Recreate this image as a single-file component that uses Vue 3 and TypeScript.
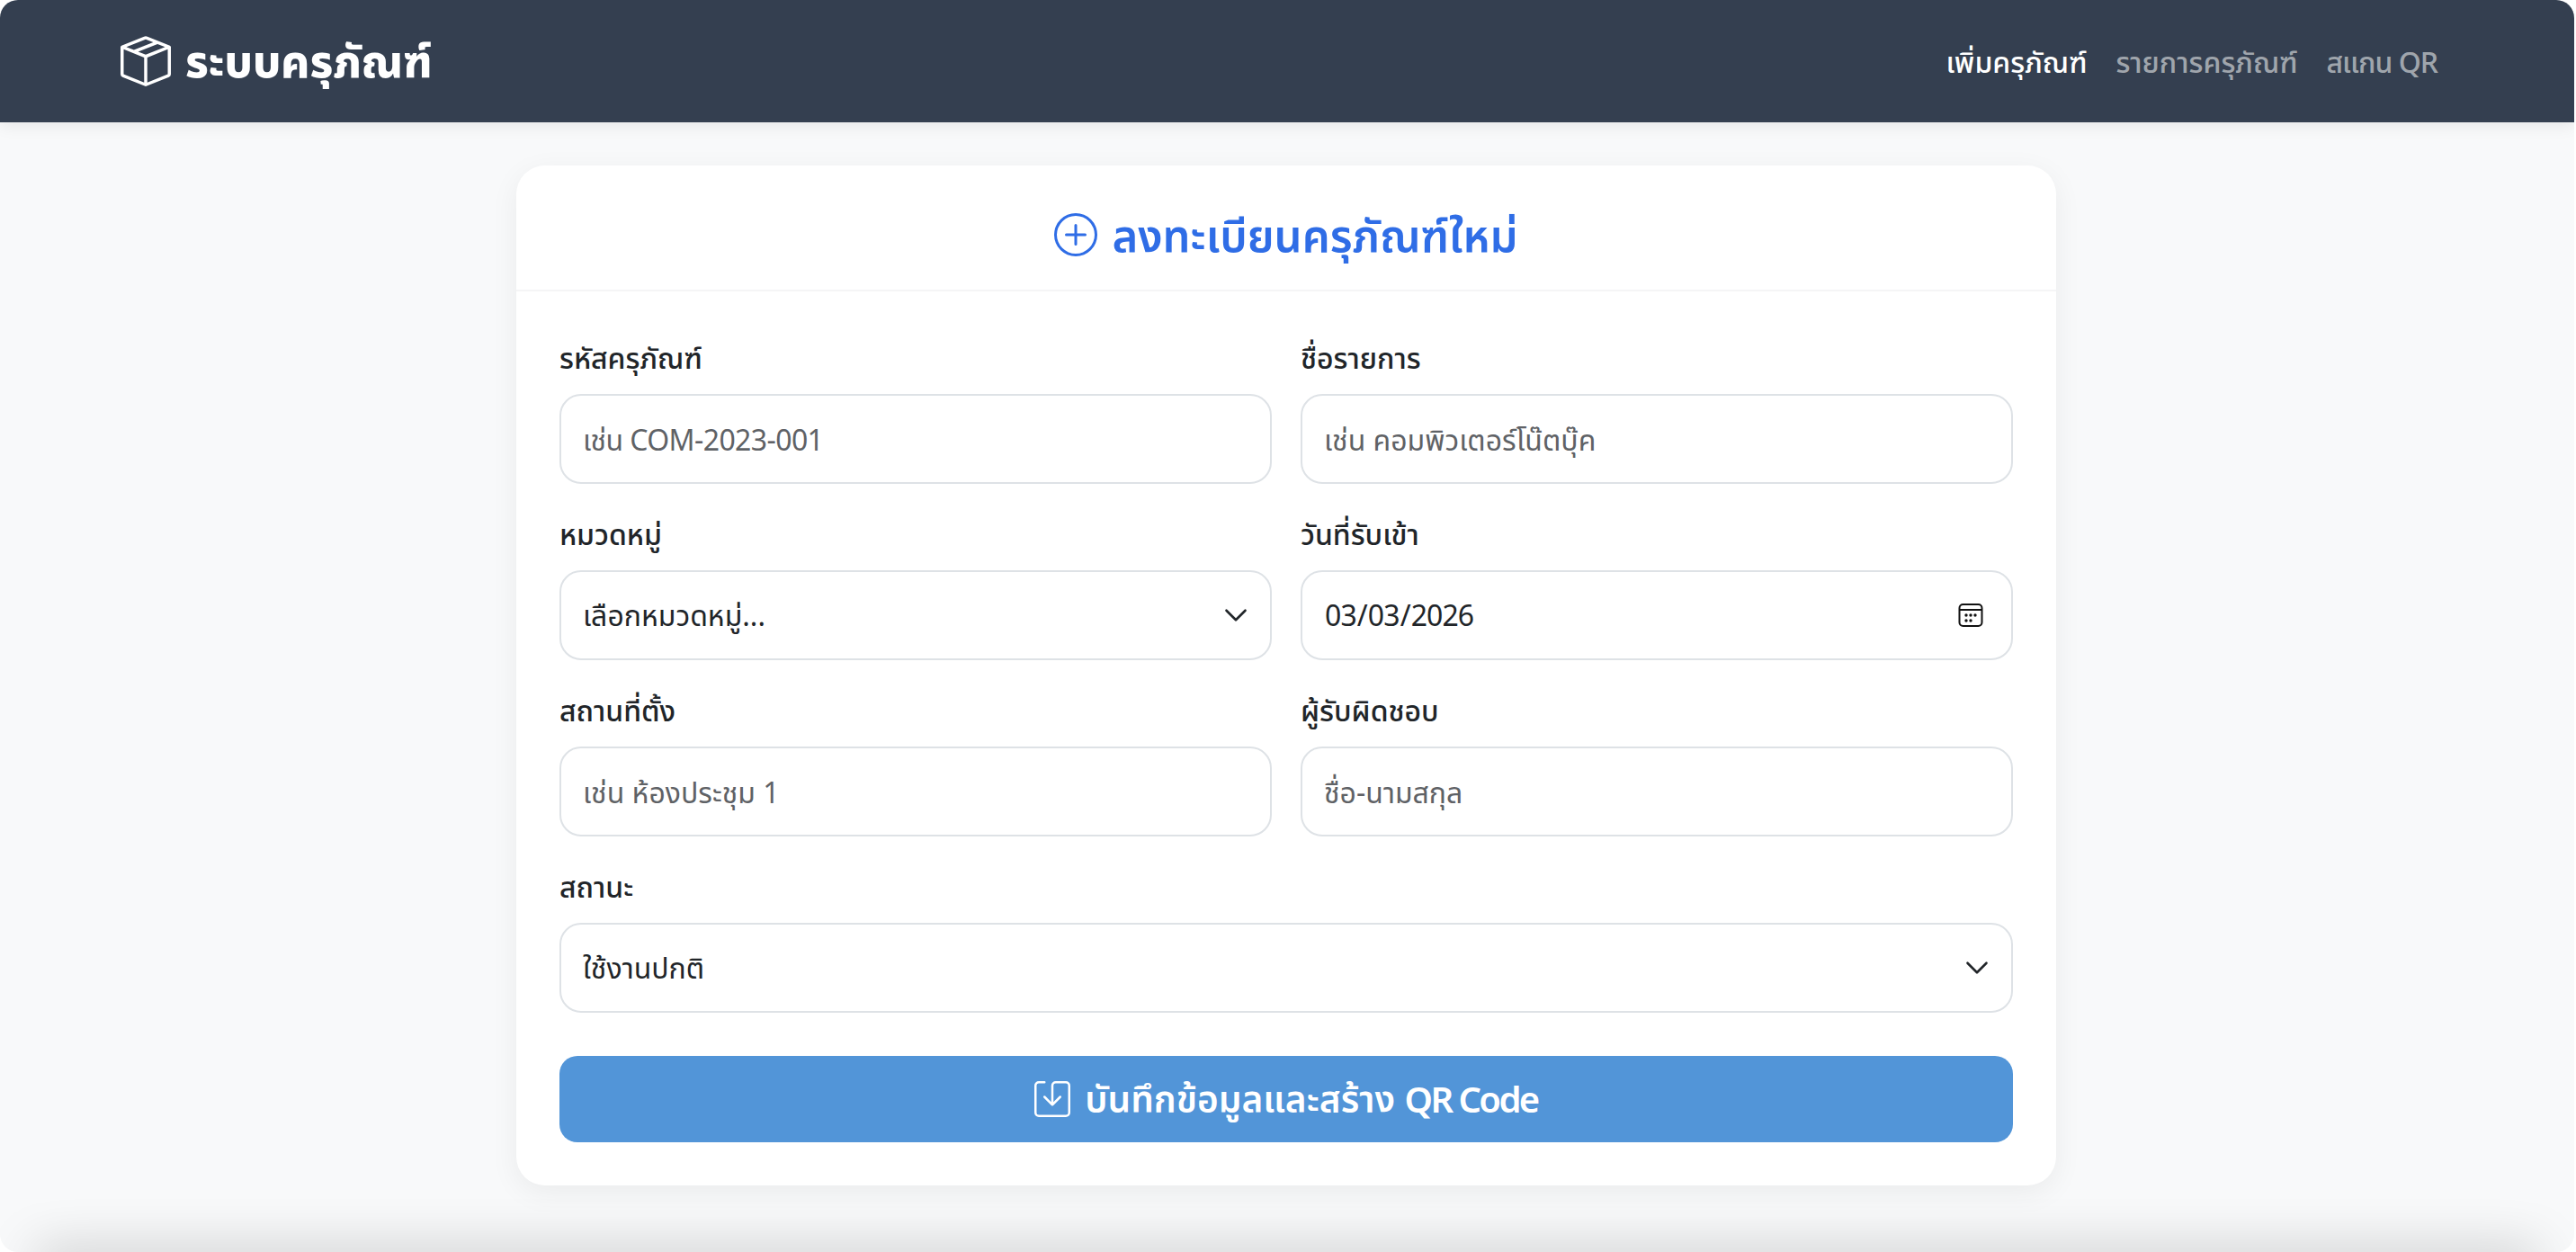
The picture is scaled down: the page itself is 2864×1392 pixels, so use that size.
<script setup lang="ts">
import { reactive } from 'vue'

const categories = ['คอมพิวเตอร์', 'เฟอร์นิเจอร์', 'เครื่องใช้สำนักงาน', 'อื่นๆ']
const statuses = ['ใช้งานปกติ', 'ส่งซ่อม', 'ชำรุด', 'จำหน่ายออก']

const form = reactive({
  code: '',
  name: '',
  category: '',
  receivedAt: '2026-03-03',
  location: '',
  owner: '',
  status: 'ใช้งานปกติ'
})
</script>

<template>
  <div class="window">
    <header class="navbar">
      <a class="brand" href="#">
        <svg class="brand-icon" viewBox="0 0 16 16" fill="currentColor">
          <path d="M8.186 1.113a.5.5 0 0 0-.372 0L1.846 3.5l2.404.961L10.404 2l-2.218-.887zm3.564 1.426L5.596 5 8 5.961 14.154 3.5l-2.404-.961zm3.25 1.7-6.5 2.6v7.922l6.5-2.6V4.24zM7.5 14.762V6.838L1 4.239v7.925l6.5 2.6zM7.443.184a1.5 1.5 0 0 1 1.114 0l7.129 2.852A.5.5 0 0 1 16 3.5v8.662a1 1 0 0 1-.629.928l-7.185 2.874a.5.5 0 0 1-.372 0L.63 13.09a1 1 0 0 1-.63-.928V3.5a.5.5 0 0 1 .314-.464L7.443.184z" />
        </svg>
        ระบบครุภัณฑ์
      </a>
      <nav class="nav">
        <a class="nav-link active" href="#">เพิ่มครุภัณฑ์</a>
        <a class="nav-link" href="#">รายการครุภัณฑ์</a>
        <a class="nav-link scan" href="#">สแกน QR</a>
      </nav>
    </header>

    <main class="main">
      <section class="card">
        <div class="card-header">
          <h1 class="title">
            <svg class="title-icon" viewBox="0 0 16 16" fill="currentColor">
              <path d="M8 15A7 7 0 1 1 8 1a7 7 0 0 1 0 14zm0 1A8 8 0 1 0 8 0a8 8 0 0 0 0 16z" />
              <path d="M8 4a.5.5 0 0 1 .5.5v3h3a.5.5 0 0 1 0 1h-3v3a.5.5 0 0 1-1 0v-3h-3a.5.5 0 0 1 0-1h3v-3A.5.5 0 0 1 8 4z" />
            </svg>
            ลงทะเบียนครุภัณฑ์ใหม่
          </h1>
        </div>

        <form class="card-body" @submit.prevent>
          <div class="fields">
            <div class="field">
              <label for="code">รหัสครุภัณฑ์</label>
              <input id="code" v-model="form.code" class="control tight" type="text" placeholder="เช่น COM-2023-001" />
            </div>
            <div class="field">
              <label for="name">ชื่อรายการ</label>
              <input id="name" v-model="form.name" class="control" type="text" placeholder="เช่น คอมพิวเตอร์โน๊ตบุ๊ค" />
            </div>
            <div class="field">
              <label for="category">หมวดหมู่</label>
              <div class="control-wrap">
                <select id="category" v-model="form.category" class="control">
                  <option value="">เลือกหมวดหมู่...</option>
                  <option v-for="c in categories" :key="c" :value="c">{{ c }}</option>
                </select>
                <svg class="chevron" viewBox="0 0 16 16" fill="none" stroke="#212529" stroke-width="1.5" stroke-linecap="round" stroke-linejoin="round">
                  <path d="m2 5 6 6 6-6" />
                </svg>
              </div>
            </div>
            <div class="field">
              <label for="receivedAt">วันที่รับเข้า</label>
              <div class="control-wrap">
                <input id="receivedAt" v-model="form.receivedAt" class="control date" type="date" />
                <svg class="calendar" viewBox="0 0 28 28" fill="none" stroke="#111" stroke-width="2">
                  <rect x="1.5" y="2" width="25" height="24" rx="4" />
                  <path d="M1.5 8h25" />
                  <g fill="#111" stroke="none">
                    <circle cx="9" cy="14" r="1.7" />
                    <circle cx="14" cy="14" r="1.7" />
                    <circle cx="19" cy="14" r="1.7" />
                    <circle cx="9" cy="20" r="1.7" />
                    <circle cx="14" cy="20" r="1.7" />
                  </g>
                </svg>
              </div>
            </div>
            <div class="field">
              <label for="location">สถานที่ตั้ง</label>
              <input id="location" v-model="form.location" class="control" type="text" placeholder="เช่น ห้องประชุม 1" />
            </div>
            <div class="field">
              <label for="owner">ผู้รับผิดชอบ</label>
              <input id="owner" v-model="form.owner" class="control" type="text" placeholder="ชื่อ-นามสกุล" />
            </div>
            <div class="field wide">
              <label for="status">สถานะ</label>
              <div class="control-wrap">
                <select id="status" v-model="form.status" class="control">
                  <option v-for="s in statuses" :key="s" :value="s">{{ s }}</option>
                </select>
                <svg class="chevron" viewBox="0 0 16 16" fill="none" stroke="#212529" stroke-width="1.5" stroke-linecap="round" stroke-linejoin="round">
                  <path d="m2 5 6 6 6-6" />
                </svg>
              </div>
            </div>
          </div>

          <button class="submit" type="submit">
            <svg class="submit-icon" viewBox="0 0 16 16" fill="currentColor">
              <path d="M2 1a1 1 0 0 0-1 1v12a1 1 0 0 0 1 1h12a1 1 0 0 0 1-1V2a1 1 0 0 0-1-1H9.5a1 1 0 0 0-1 1v7.293l2.646-2.647a.5.5 0 0 1 .708.708l-3.5 3.5a.5.5 0 0 1-.708 0l-3.5-3.5a.5.5 0 1 1 .708-.708L7.5 9.293V2a2 2 0 0 1 2-2H14a2 2 0 0 1 2 2v12a2 2 0 0 1-2 2H2a2 2 0 0 1-2-2V2a2 2 0 0 1 2-2h2.5a.5.5 0 0 1 0 1H2z" />
            </svg>
            <span>บันทึกข้อมูลและสร้าง <span class="code-label">QR Code</span></span>
          </button>
        </form>
      </section>
    </main>

    <div class="edge-shadow"></div>
  </div>
</template>

<style>
html,
body {
  margin: 0;
  background: #fff;
}
</style>

<style scoped>
.window {
  position: relative;
  box-sizing: border-box;
  width: 2862px;
  height: 1392px;
  overflow: hidden;
  background: #f8f9fa;
  border-radius: 20px;
  color: #212529;
  font-family: "Noto Sans", "Noto Sans Thai", "Liberation Sans", sans-serif;
  font-size: 32px;
  line-height: 1.5;
}

.navbar {
  position: relative;
  display: flex;
  align-items: center;
  justify-content: space-between;
  height: 136px;
  padding: 0 136px 0 134px;
  box-sizing: border-box;
  background: #343f50;
  box-shadow: 0 4px 16px rgba(0, 0, 0, 0.08);
}

.brand {
  display: flex;
  align-items: center;
  gap: 16px;
  color: #fff;
  font-size: 49px;
  font-weight: 800;
  text-decoration: none;
}

.brand-icon {
  width: 56px;
  height: 56px;
}

.nav {
  display: flex;
  padding-top: 2px;
}

.nav-link {
  padding: 16px;
  color: rgba(255, 255, 255, 0.55);
  font-weight: 500;
  text-decoration: none;
}

.nav-link.active {
  color: #fff;
}

.nav-link.scan {
  letter-spacing: -1px;
}

.main {
  padding: 48px 2px 0 0;
}

.card {
  width: 1712px;
  margin: 0 auto;
  background: #fff;
  border-radius: 32px;
  box-shadow: 0 8px 32px rgba(0, 0, 0, 0.06);
}

.card-header {
  padding: 41px 48px 25px;
  border-bottom: 2px solid #f5f5f6;
}

.title {
  display: flex;
  align-items: center;
  justify-content: center;
  gap: 16px;
  margin: 0;
  color: #2f6de6;
  font-size: 49px;
  font-weight: 600;
  line-height: 72px;
}

.title-icon {
  width: 48px;
  height: 48px;
}

.card-body {
  padding: 50px 48px 48px;
}

.fields {
  display: grid;
  grid-template-columns: 1fr 1fr;
  gap: 32px;
}

.field.wide {
  grid-column: span 2;
}

.field label {
  display: block;
  margin-bottom: 16px;
  font-weight: 500;
}

.control-wrap {
  position: relative;
}

.control {
  display: block;
  box-sizing: border-box;
  width: 100%;
  height: 100px;
  padding: 0 24px;
  background: #fff;
  border: 2px solid #dee2e6;
  border-radius: 24px;
  color: #212529;
  font: inherit;
  appearance: none;
  outline: none;
}

.control.tight {
  letter-spacing: -0.6px;
}

.control.date {
  letter-spacing: -0.9px;
}

.control::placeholder {
  color: #5f6266;
}

.date::-webkit-calendar-picker-indicator {
  opacity: 0;
}

.chevron {
  position: absolute;
  top: 36px;
  right: 26px;
  width: 28px;
  height: 28px;
  pointer-events: none;
}

.calendar {
  position: absolute;
  top: 36px;
  right: 33px;
  width: 28px;
  height: 28px;
  pointer-events: none;
}

.submit {
  display: flex;
  align-items: center;
  justify-content: center;
  gap: 16px;
  width: 100%;
  height: 96px;
  margin-top: 48px;
  background: #5295d8;
  border: none;
  border-radius: 20px;
  color: #fff;
  font: inherit;
  font-size: 40.5px;
  font-weight: 600;
}

.code-label {
  font-size: 40px;
  letter-spacing: -2.6px;
}

.submit-icon {
  width: 40px;
  height: 40px;
}

.edge-shadow {
  position: absolute;
  left: 40px;
  right: 40px;
  bottom: -24px;
  height: 24px;
  box-shadow: 0 0 56px rgba(0, 0, 0, 0.28);
}
</style>
